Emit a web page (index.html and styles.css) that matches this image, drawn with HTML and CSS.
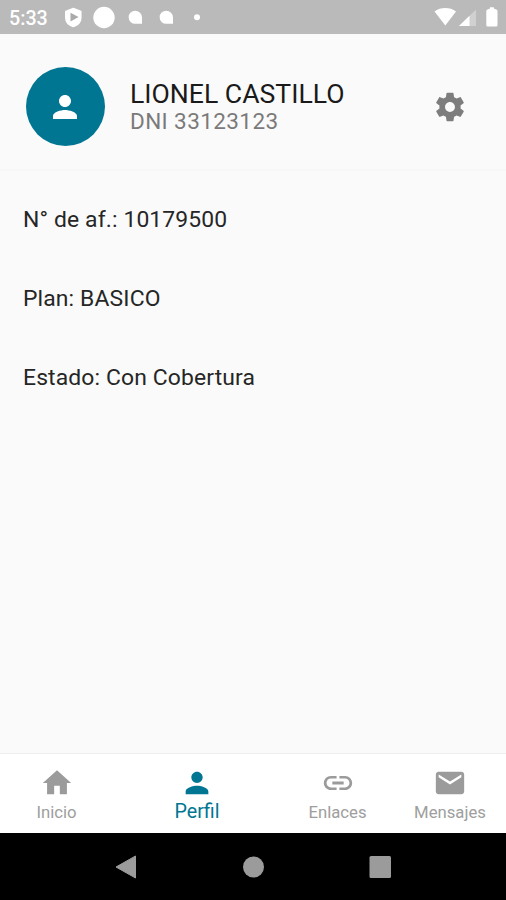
FILE: index.html
```html
<!DOCTYPE html>
<html lang="es">
<head>
  <meta charset="UTF-8" />
  <meta name="viewport" content="width=device-width, initial-scale=1" />
  <title>Perfil</title>
  <link rel="stylesheet" href="styles.css">
</head>
<body>

<div class="status-bar">
  <span class="clock">5:33</span>
  <svg class="notifications" width="140" height="34" viewBox="0 0 140 34">
    <path fill="#fff" d="M8.300 8.500l7.500 3v6.500c0 3.500-3 7-7.500 8.500-4.500-1.500-7.500-5-7.500-8.500v-6.500z" stroke="#fff" stroke-width="1.500" stroke-linejoin="round"/>
    <path fill="#aaa" d="M5.500 12.800v8.600l8-4.300z"/>
    <circle cx="39" cy="17.500" r="10.700" fill="#fff"/>
    <path fill="#fff" d="M70.200 10.700a6.800 6.800 0 0 1 6.800 6.800v6.300h-6.800a6.550 6.550 0 0 1 0-13.100z"/>
    <path fill="#fff" d="M101.200 10.700a6.800 6.800 0 0 1 6.800 6.800v6.300h-6.800a6.550 6.550 0 0 1 0-13.100z"/>
    <circle cx="132" cy="17.300" r="3" fill="#fff"/>
  </svg>
  <svg class="signals" width="66" height="34" viewBox="0 0 66 34">
    <path fill="#fff" d="M1.500 11.500C7.500 6.900 17 6.900 23 11.500L12.300 25.500z"/>
    <path fill="#d0d0d0" d="M43 9.500v16.500h-17z"/>
    <path fill="#fff" d="M36.500 15.800v10.200H26z"/>
    <path fill="#fff" d="M57 8.500V7.300h3.800v1.200l3 1.300q.7.500.7 1.200v14q0 1.500-1.500 1.500h-8.200q-1.500 0-1.500-1.500V11q0-.7.700-1.200z"/>
  </svg>
</div>

<header class="profile">
  <div class="avatar">
    <svg width="36" height="36" viewBox="0 0 24 24"><path d="M12 12c2.210 0 4-1.790 4-4s-1.790-4-4-4-4 1.790-4 4 1.790 4 4 4zm0 2c-2.670 0-8 1.340-8 4v2h16v-2c0-2.660-5.330-4-8-4z"/></svg>
  </div>
  <div class="identity">
    <h1>LIONEL CASTILLO</h1>
    <p>DNI 33123123</p>
  </div>
  <button type="button" class="settings" aria-label="Ajustes">
    <svg width="34" height="34" viewBox="0 0 24 24"><path d="M19.430 12.980c.04-.32.07-.64.07-.98s-.03-.66-.07-.98l2.110-1.650c.19-.15.24-.42.12-.64l-2-3.460c-.12-.22-.39-.3-.61-.22l-2.490 1c-.52-.4-1.080-.73-1.690-.98l-.38-2.650C14.460 2.180 14.250 2 14 2h-4c-.25 0-.46.18-.49.42l-.38 2.650c-.61.25-1.170.59-1.690.98l-2.490-1c-.23-.09-.49 0-.61.22l-2 3.460c-.13.22-.07.49.12.64l2.110 1.650c-.04.32-.07.65-.07.98s.03.66.07.98l-2.110 1.650c-.19.15-.24.42-.12.64l2 3.460c.12.22.39.3.61.22l2.490-1c.52.4 1.080.73 1.690.98l.38 2.650c.03.24.24.42.49.42h4c.25 0 .46-.18.49-.42l.38-2.650c.61-.25 1.170-.59 1.690-.98l2.490 1c.23.09.49 0 .61-.22l2-3.460c.12-.22.07-.49-.12-.64l-2.110-1.650zM12 15.500c-1.930 0-3.500-1.570-3.500-3.500s1.570-3.500 3.500-3.500 3.500 1.570 3.500 3.500-1.570 3.500-3.500 3.500z"/></svg>
  </button>
</header>

<main class="details">
  <p>N° de af.: 10179500</p>
  <p>Plan: BASICO</p>
  <p>Estado: Con Cobertura</p>
</main>

<nav class="tabs">
  <a class="tab">
    <svg width="34" height="34" viewBox="0 0 24 24"><path d="M10 20v-6h4v6h5v-8h3L12 3 2 12h3v8z"/></svg>
    <span>Inicio</span>
  </a>
  <a class="tab active">
    <svg width="34" height="34" viewBox="0 0 24 24"><path d="M12 12c2.210 0 4-1.790 4-4s-1.790-4-4-4-4 1.790-4 4 1.790 4 4 4zm0 2c-2.670 0-8 1.340-8 4v2h16v-2c0-2.660-5.330-4-8-4z"/></svg>
    <span>Perfil</span>
  </a>
  <a class="tab">
    <svg width="34" height="34" viewBox="0 0 24 24"><path d="M3.900 12c0-1.710 1.390-3.100 3.100-3.100h4V7H7c-2.760 0-5 2.240-5 5s2.240 5 5 5h4v-1.900H7c-1.710 0-3.100-1.390-3.100-3.100zM8 13h8v-2H8v2zm9-6h-4v1.900h4c1.710 0 3.100 1.390 3.100 3.100s-1.390 3.100-3.100 3.100h-4V17h4c2.760 0 5-2.240 5-5s-2.240-5-5-5z"/></svg>
    <span>Enlaces</span>
  </a>
  <a class="tab">
    <svg width="34" height="34" viewBox="0 0 24 24"><path d="M20 4H4c-1.100 0-1.990.9-1.990 2L2 18c0 1.100.9 2 2 2h16c1.100 0 2-.9 2-2V6c0-1.100-.9-2-2-2zm0 4l-8 5-8-5V6l8 5 8-5v2z"/></svg>
    <span>Mensajes</span>
  </a>
</nav>

<div class="system-nav">
  <svg width="22" height="24" viewBox="0 0 22 24"><path d="M20.500 1v22L1 12z" stroke="#9b9b9b" stroke-linejoin="round"/></svg>
  <svg width="22" height="22" viewBox="0 0 22 22"><circle cx="11.500" cy="11" r="10.500"/></svg>
  <svg width="22" height="22" viewBox="0 0 22 22"><rect x="0.500" width="21.500" height="22" rx="1.500"/></svg>
</div>

</body>
</html>
```
FILE: styles.css
```css
* {
  box-sizing: border-box;
}
body {
  margin: 0;
  height: 900px;
  display: flex;
  flex-direction: column;
  font-family: Roboto, "Liberation Sans", sans-serif;
  background-color: #fafafa;
  color: #262626;
  overflow: hidden;
}
h1, p {
  margin: 0;
  font-weight: 400;
  white-space: nowrap;
}
svg {
  display: block;
  flex: none;
}

/* Barra de estado */
.status-bar {
  height: 34px;
  display: flex;
  align-items: center;
  padding: 0 7px 0 9px;
  background-color: #bababa;
  color: #fff;
}
.clock {
  width: 56px;
  padding-top: 3px;
  font-size: 19.7px;
  font-weight: 500;
  line-height: 24px;
}
.signals {
  margin-left: auto;
}

/* Cabecera del perfil */
.profile {
  height: 137px;
  display: flex;
  align-items: center;
  padding: 10px 39px 0 25px;
  border-bottom: 2px solid #f7f7f7;
}
.avatar {
  width: 79px;
  height: 79px;
  display: flex;
  align-items: center;
  justify-content: center;
  border-radius: 50%;
  margin-left: 0.5px;
  background-color: #007693;
}
.avatar svg {
  fill: #fff;
}
.identity {
  margin-left: 25.5px;
}
.identity h1 {
  font-size: 26.6px;
  line-height: 29px;
  color: #1a1a1a;
}
.identity p {
  font-size: 22.5px;
  line-height: 27px;
  letter-spacing: 0.4px;
  color: #7a7a7a;
}
.settings {
  margin-left: auto;
  padding: 0;
  border: none;
  background: none;
}
.settings svg {
  fill: #7d7d7d;
}

/* Datos del afiliado */
.details {
  flex: 1;
  padding: 35px 23px;
  display: flex;
  flex-direction: column;
  gap: 51px;
}
.details p {
  font-size: 22.9px;
  line-height: 28px;
  letter-spacing: 0.13px;
}

/* Pestañas */
.tabs {
  height: 80px;
  display: flex;
  border-top: 1px solid #eee;
  background-color: #fff;
}
.tab {
  flex: 1;
  display: flex;
  flex-direction: column;
  align-items: center;
  padding: 11.5px 0 0 0.5px;
  font-size: 16.7px;
  line-height: 20px;
  color: #9e9e9e;
  fill: #9b9b9b;
}
.tab span {
  margin-top: 3px;
}
.tab.active {
  flex: 1.5;
  font-size: 19.7px;
  color: #007693;
  fill: #007693;
}
.tab.active span {
  margin-top: 2px;
}

/* Botones del sistema */
.system-nav {
  height: 67px;
  display: flex;
  align-items: center;
  justify-content: space-between;
  padding: 0 115px;
  background-color: #000;
  fill: #9b9b9b;
}
```
